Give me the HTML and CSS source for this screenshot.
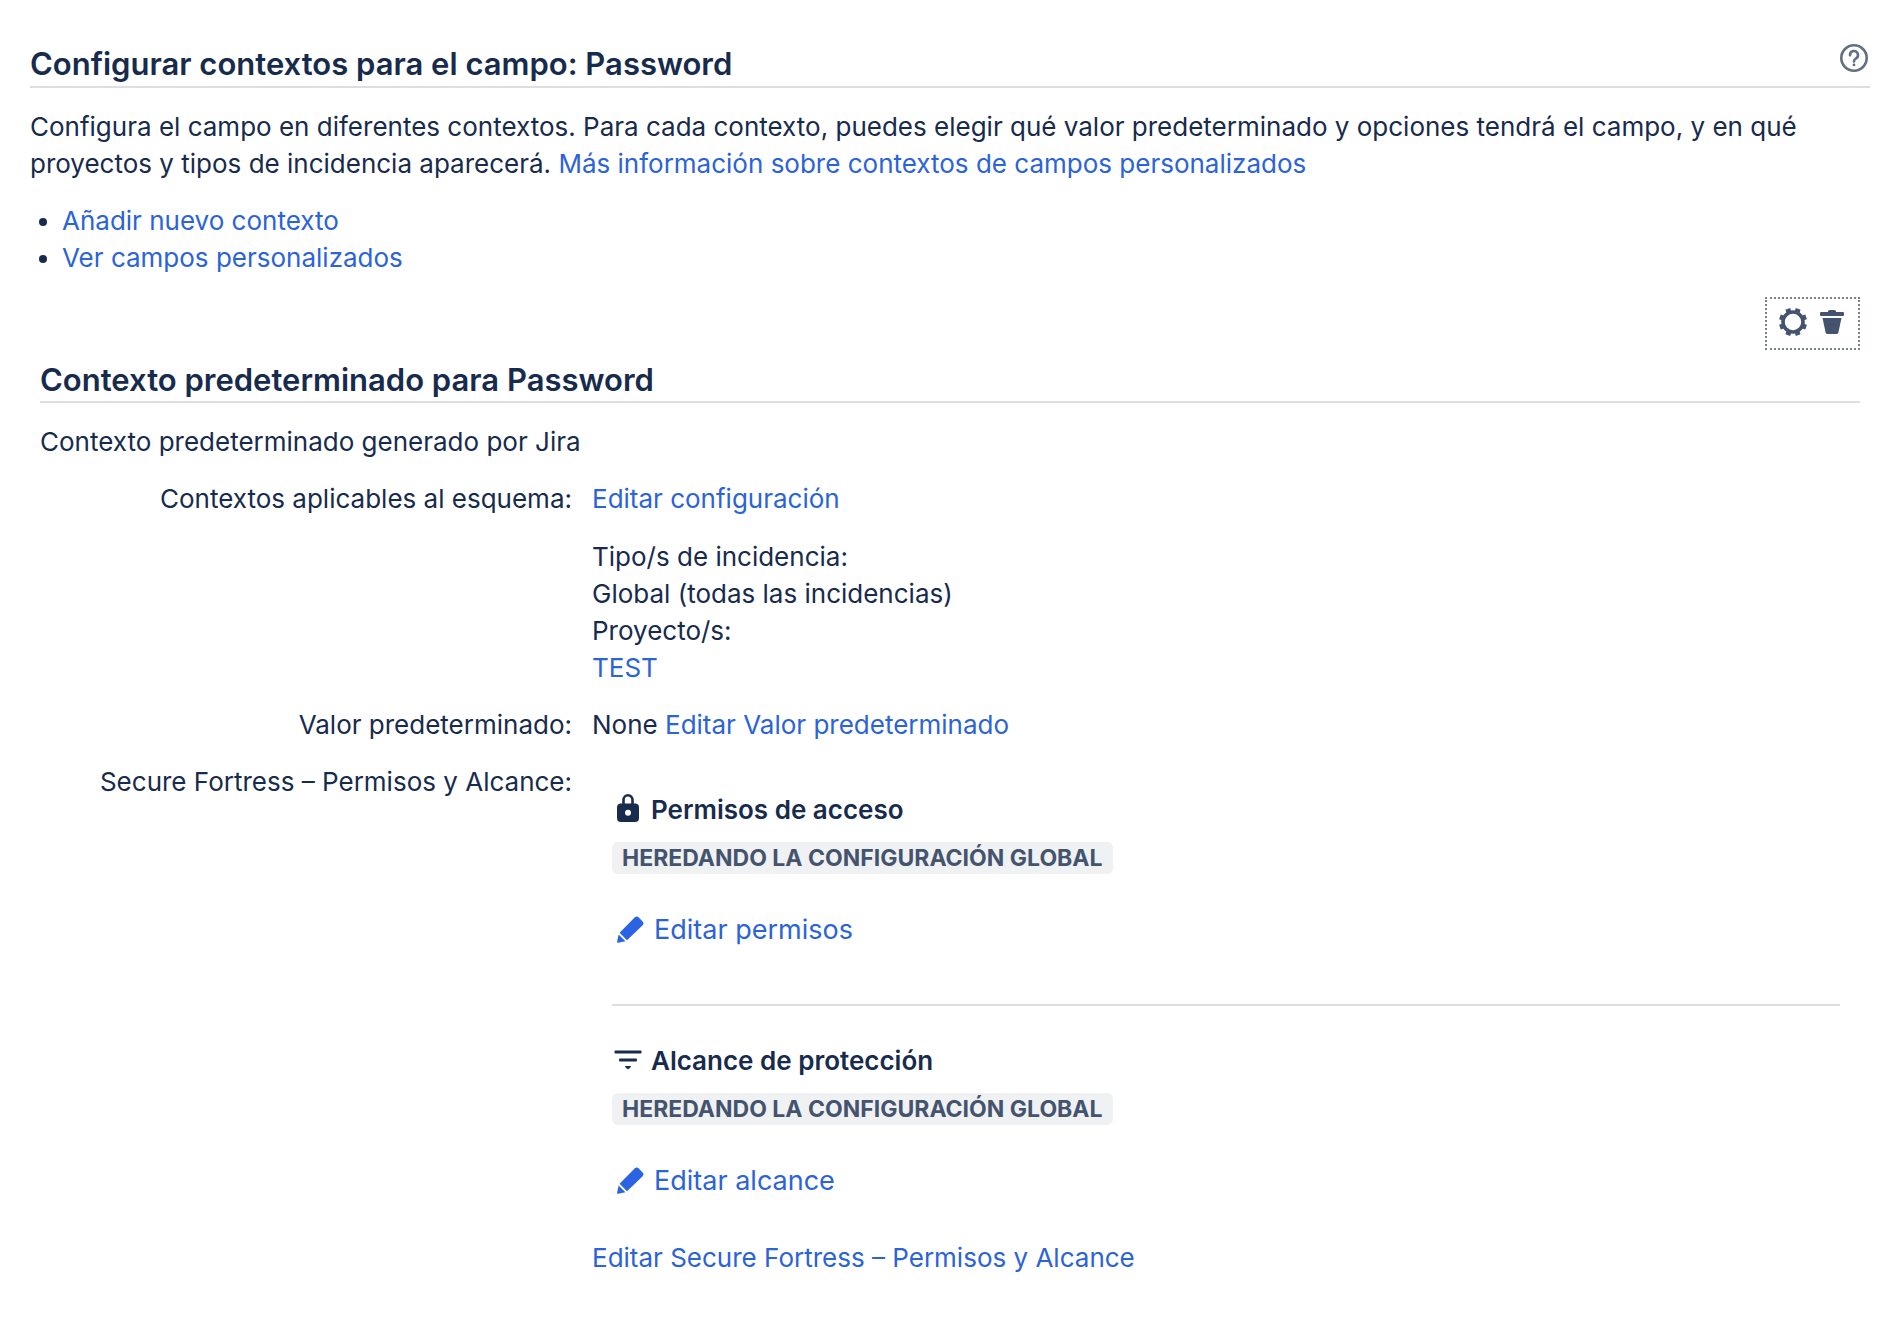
FILE: index.html
```html
<!DOCTYPE html>
<html lang="es">
<head>
    <meta charset="UTF-8">
    <meta name="viewport" content="width=device-width, initial-scale=1.0">
    <title>Configurar contextos para el campo: Password</title>
    <link rel="stylesheet" href="styles.css">
</head>
<body>
    <!-- Iconos compartidos -->
    <svg class="sprite" aria-hidden="true">
        <symbol id="icon-pencil" viewBox="0 0 28 28">
            <path d="M3.6 16.8 18.6 1.6a3 3 0 0 1 4.200 0l3.600 3.600a3 3 0 0 1 0 4.200L11 24.200z"/>
            <path d="M2.600 18.400 9.400 25.200 2 26.800a.8.800 0 0 1-.9-1z"/>
        </symbol>
    </svg>

    <main class="page">
        <header class="page-header">
            <h2>Configurar contextos para el campo: Password</h2>
            <a class="help-link" href="#" aria-label="Ayuda">
                <svg width="28" height="28" viewBox="0 0 28 28" fill="none" stroke="currentColor" stroke-width="2.6" stroke-linecap="round">
                    <circle cx="14" cy="14" r="12.7"/>
                    <path d="M10 11.2a4 4 0 1 1 5.9 3.3C14.6 15.3 14 16 14 17.4"/>
                    <circle cx="14" cy="20.9" r="1.4" fill="currentColor" stroke="none"/>
                </svg>
            </a>
        </header>

        <p>Configura el campo en diferentes contextos. Para cada contexto, puedes elegir qué valor predeterminado y opciones tendrá el campo, y en qué proyectos y tipos de incidencia aparecerá. <a href="#">Más información sobre contextos de campos personalizados</a></p>

        <ul class="links">
            <li><a href="#">Añadir nuevo contexto</a></li>
            <li><a href="#">Ver campos personalizados</a></li>
        </ul>

        <section class="context">
            <div class="toolbar">
                <a href="#" aria-label="Editar contexto">
                    <svg width="28" height="28" viewBox="0 0 28 28" fill="none" stroke="currentColor">
                        <circle cx="14" cy="14" r="10" stroke-width="3.6"/>
                        <path stroke-width="5" d="M18.2 3.9 19.2.9M9.8 3.9 8.8.9M18.2 24.1 19.2 27.1M9.8 24.1 8.8 27.1M3.9 9.8.9 8.8M3.9 18.2.9 19.2M24.1 9.8 27.1 8.8M24.1 18.2 27.1 19.2"/>
                    </svg>
                </a>
                <a href="#" aria-label="Eliminar contexto">
                    <svg width="24" height="24" viewBox="0 0 24 24" fill="currentColor">
                        <path d="M8 1.5Q8 0 9.5 0h5Q16 0 16 1.5V2h7a1 1 0 0 1 1 1v2a1 1 0 0 1-1 1H1a1 1 0 0 1-1-1V3a1 1 0 0 1 1-1h7z"/>
                        <path d="M2.5 8h19L18.4 22.6Q18.1 24 16.7 24H7.3Q5.900 24 5.6 22.6z"/>
                    </svg>
                </a>
            </div>

            <h3>Contexto predeterminado para Password</h3>
            <p>Contexto predeterminado generado por Jira</p>

            <table class="config">
                <tbody>
                    <tr>
                        <th scope="row">Contextos aplicables al esquema:</th>
                        <td>
                            <p><a href="#">Editar configuración</a></p>
                            <p>
                                Tipo/s de incidencia:<br>
                                Global (todas las incidencias)<br>
                                Proyecto/s:<br>
                                <a href="#">TEST</a>
                            </p>
                        </td>
                    </tr>
                    <tr>
                        <th scope="row">Valor predeterminado:</th>
                        <td>None <a href="#">Editar Valor predeterminado</a></td>
                    </tr>
                    <tr>
                        <th scope="row">Secure Fortress – Permisos y Alcance:</th>
                        <td>
                            <div class="panel">
                                <div class="panel-section">
                                    <h4>
                                        <svg width="32" height="32" viewBox="0 0 32 32" fill="currentColor">
                                            <path d="M11.5 12V6.8a4.500 4.500 0 0 1 9 0V12" fill="none" stroke="currentColor" stroke-width="2.6"/>
                                            <path fill-rule="evenodd" d="M9 10.5h14a4 4 0 0 1 4 4V25a4 4 0 0 1-4 4H9a4 4 0 0 1-4-4V14.500a4 4 0 0 1 4-4zm7 6.200a3 3 0 1 0 0 6 3 3 0 0 0 0-6z"/>
                                        </svg>
                                        Permisos de acceso
                                    </h4>
                                    <span class="lozenge">HEREDANDO LA CONFIGURACIÓN GLOBAL</span>
                                    <a class="edit-link" href="#">
                                        <svg width="28" height="28"><use href="#icon-pencil"/></svg>
                                        Editar permisos
                                    </a>
                                </div>
                                <div class="panel-section">
                                    <h4>
                                        <svg width="32" height="32" viewBox="0 0 32 32" fill="currentColor">
                                            <rect x="2.5" y="6.5" width="27" height="3" rx="1"/>
                                            <rect x="7" y="14.5" width="18" height="3" rx="1"/>
                                            <path d="M13.8 22h4.400q1 0 .6.900L17 24.800q-1 .9-2 0l-1.800-1.900q-.4-.9.600-.9z"/>
                                        </svg>
                                        Alcance de protección
                                    </h4>
                                    <span class="lozenge">HEREDANDO LA CONFIGURACIÓN GLOBAL</span>
                                    <a class="edit-link" href="#">
                                        <svg width="28" height="28"><use href="#icon-pencil"/></svg>
                                        Editar alcance
                                    </a>
                                </div>
                            </div>
                            <a href="#">Editar Secure Fortress – Permisos y Alcance</a>
                        </td>
                    </tr>
                </tbody>
            </table>
        </section>
    </main>
</body>
</html>
```

FILE: styles.css
```css
* {
    margin: 0;
    padding: 0;
    box-sizing: border-box;
}

body {
    font-family: 'Inter', 'Liberation Sans', sans-serif;
    font-size: 26px;
    line-height: 37px;
    color: #172b4d;
    background-color: #fff;
}

a {
    color: #2b63d9;
    text-decoration: none;
}

a:hover {
    text-decoration: underline;
}

svg {
    display: block;
    flex: none;
}

.sprite {
    position: absolute;
    width: 0;
    height: 0;
}

.page {
    padding: 44px 18px 40px 30px;
}

h2,
h3 {
    font-size: 31px;
    font-weight: 600;
    line-height: 40px;
}

/* Cabecera */
.page-header {
    display: flex;
    justify-content: space-between;
    align-items: flex-start;
    margin-bottom: 20px;
    padding-right: 2px;
    border-bottom: 2px solid #dddee1;
}

.page-header h2 {
    padding-bottom: 2px;
}

.help-link {
    color: #626f86;
}

.links {
    margin-top: 20px;
    padding-left: 32px;
}

/* Contexto */
.context {
    padding: 21px 10px 0;
}

.toolbar {
    display: flex;
    align-items: flex-start;
    gap: 13px;
    width: max-content;
    height: 53px;
    margin-left: auto;
    padding: 9px 14px 10px 12px;
    border: 2px dotted #7a8190;
}

.toolbar a {
    display: flex;
    align-items: center;
    height: 28px;
    color: #44546f;
}

.context h3 {
    margin: 10px 0 20px;
    padding-bottom: 1px;
    border-bottom: 2px solid #dddee1;
}

.config {
    width: 100%;
    margin-top: 10px;
    border-collapse: collapse;
}

.config th,
.config td {
    padding: 10px;
    vertical-align: top;
}

.config th {
    width: 542px;
    font-weight: 400;
    text-align: right;
}

.config p + p {
    margin-top: 21px;
}

/* Permisos y alcance */
.panel {
    padding: 0 10px 0 20px;
}

.panel-section {
    display: flex;
    flex-direction: column;
    align-items: flex-start;
    padding: 28px 0 56px;
}

.panel-section + .panel-section {
    padding: 36px 0 40px;
    border-top: 2px solid #dddee1;
}

h4 {
    display: flex;
    gap: 7px;
    font-size: 26px;
    font-weight: 600;
}

h4 svg {
    margin-top: 2px;
}

.lozenge {
    margin-top: 14px;
    padding: 0 10px;
    border-radius: 6px;
    font-size: 23px;
    font-weight: 700;
    line-height: 32px;
    color: #44546f;
    background-color: #f0f1f3;
}

.edit-link {
    display: flex;
    align-items: center;
    gap: 10px;
    margin-top: 37px;
    padding-left: 4px;
    font-size: 27px;
}

.edit-link svg {
    fill: #2b63e3;
}
```
